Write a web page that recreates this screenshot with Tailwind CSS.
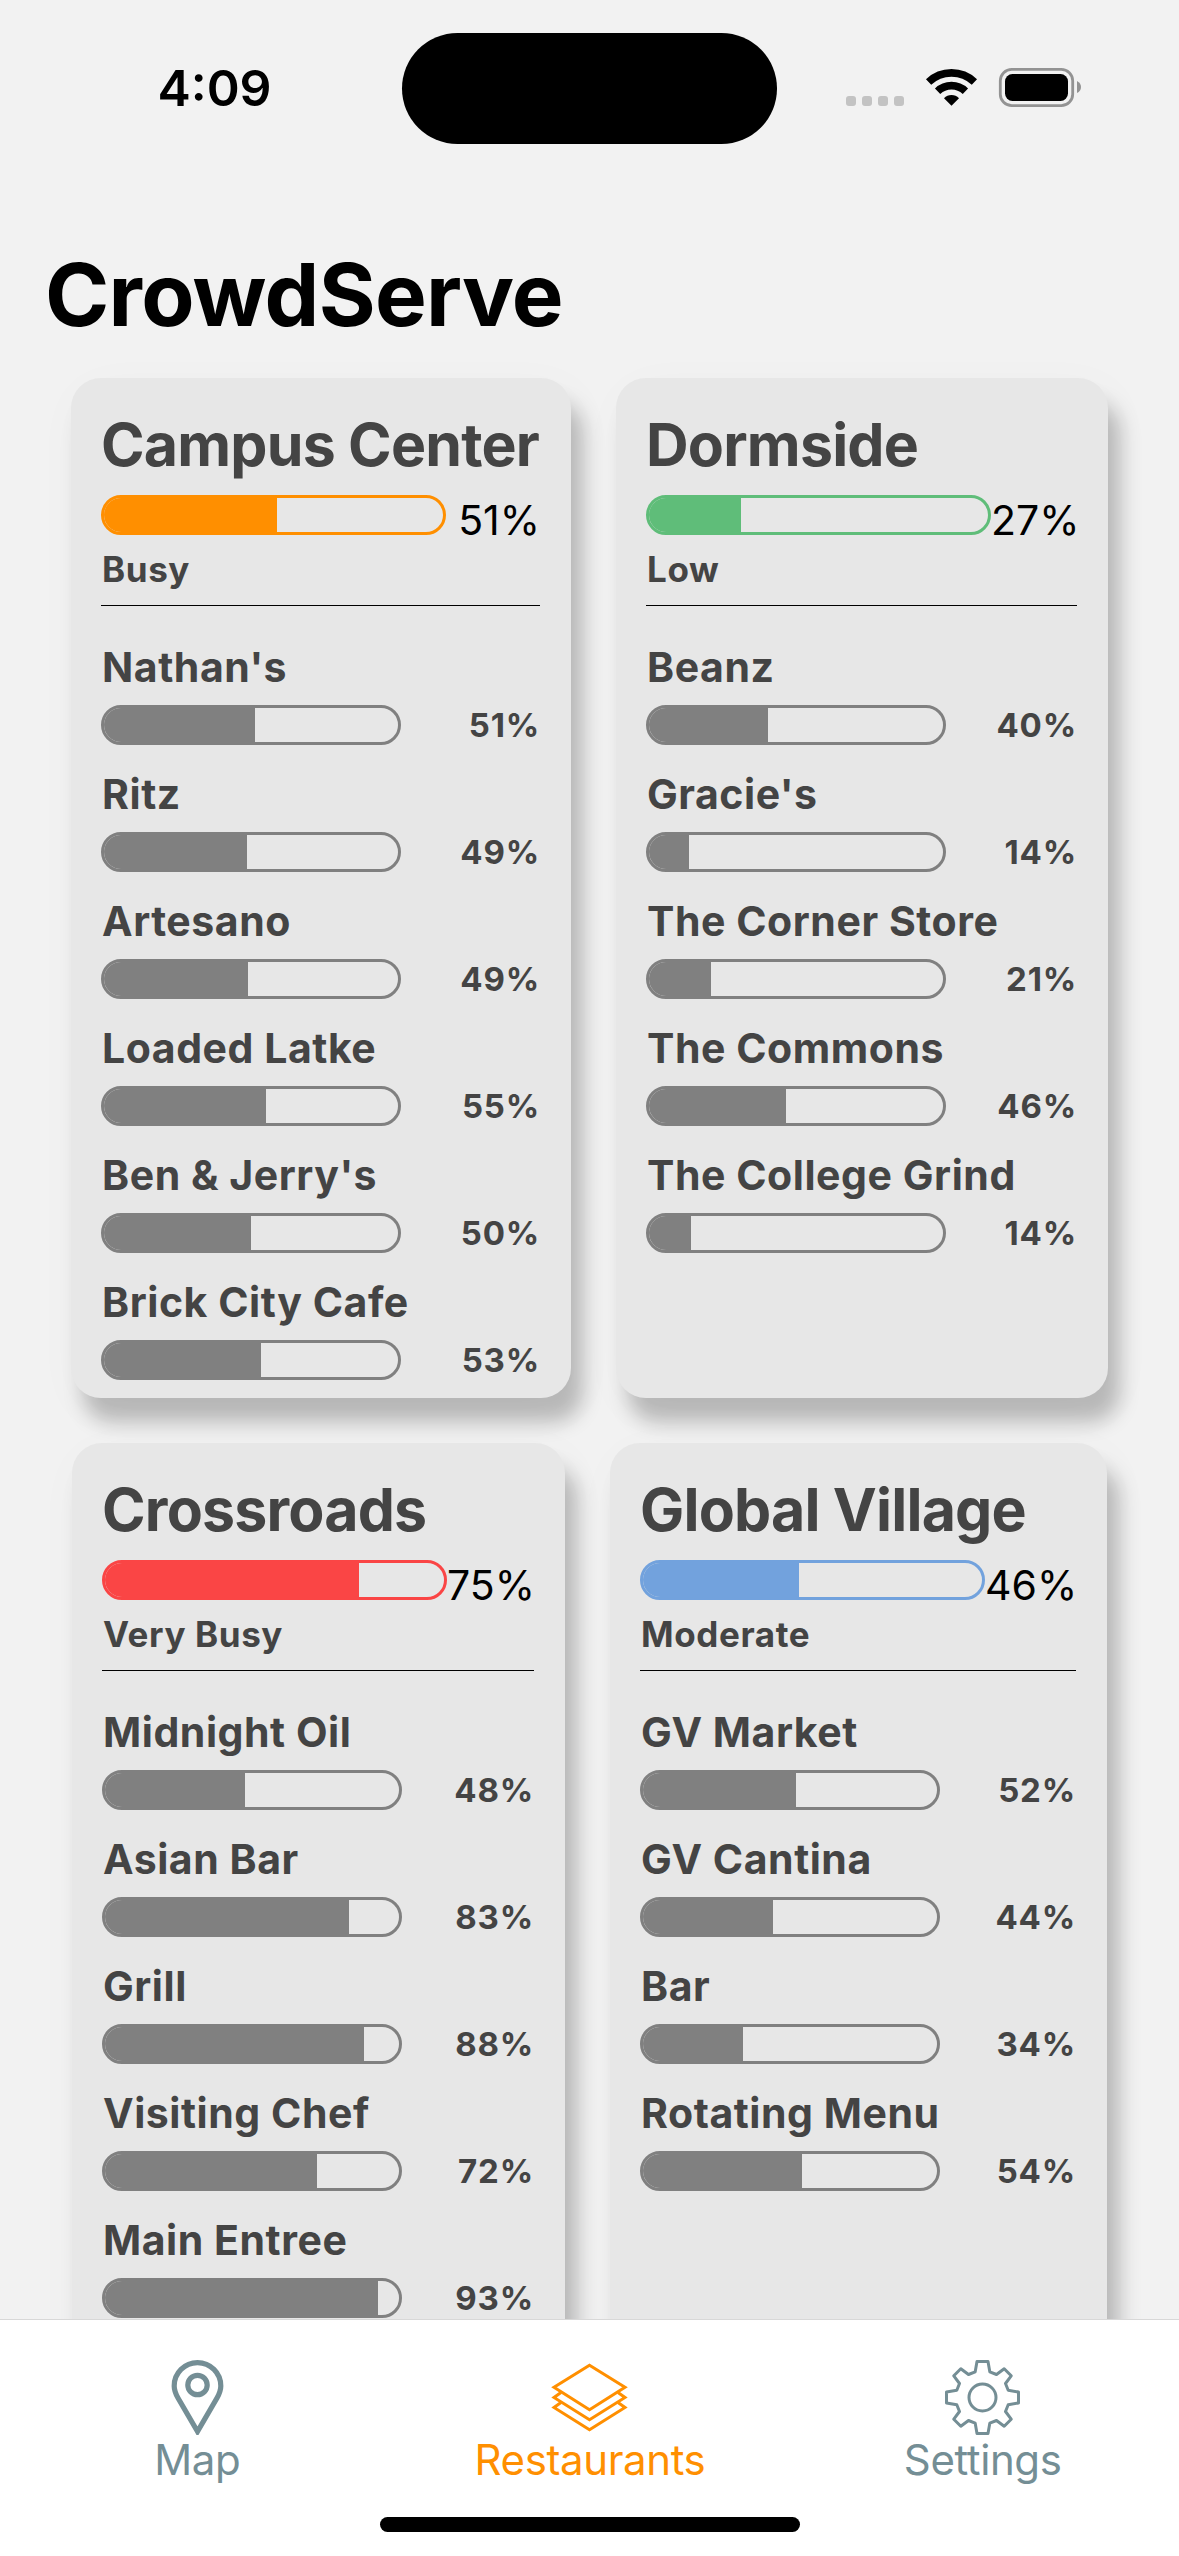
<!DOCTYPE html>
<html lang="en">
<head>
<meta charset="utf-8">
<title>CrowdServe</title>
<script src="https://cdn.jsdelivr.net/npm/@tailwindcss/browser@4"></script>
</head>
<body class="bg-[#f2f2f2] font-['Inter',sans-serif] text-black">
<div class="flex h-[2556px] w-[1179px] flex-col overflow-hidden">
  <header class="flex h-[245px] shrink-0 items-start">
    <div class="flex w-[402px] justify-center pt-[57px] pl-[27px] text-[50px] leading-[62px] font-semibold">4:09</div>
    <div class="mt-[33px] h-[111px] w-[375px] rounded-full bg-black"></div>
    <svg class="mt-[60px] ml-[63px] h-[56px] w-[250px]" viewBox="840 60 250 56">
      <g fill="#c3c3c3"><rect x="846" y="96" width="10" height="10" rx="3"/><rect x="862" y="96" width="10" height="10" rx="3"/><rect x="878" y="96" width="10" height="10" rx="3"/><rect x="894" y="96" width="10" height="10" rx="3"/></g>
      <g fill="none" stroke="#000" stroke-width="7.6"><path d="M928.6 82A33.3 33.3 0 0 1 974.4 82"/><path d="M937.6 91.2A20 20 0 0 1 965.4 91.2"/></g>
      <path d="M951.5 105.8L944 98.2A10.6 10.6 0 0 1 959 98.2Z"/>
      <rect x="1000.3" y="69.3" width="72.4" height="36.4" rx="11.5" fill="none" stroke="#939393" stroke-width="2.8"/>
      <rect x="1005" y="74" width="63" height="27" rx="7.5"/>
      <path d="M1077 81Q1081 83 1081 87T1077 93Z" fill="#939393"/>
    </svg>
  </header>
  <h1 class="h-[133px] shrink-0 pl-[45px] text-[87px] leading-[100px] font-bold tracking-[-0.75px]">CrowdServe</h1>
  <main class="flex min-h-0 flex-1 flex-col gap-[45px]">
    <div class="flex shrink-0 gap-[45px] pl-[71px]" id="row1"></div>
    <div class="flex shrink-0 gap-[45px] pl-[72px]" id="row2"></div>
  </main>
  <nav class="relative z-10 flex h-[237px] shrink-0 flex-col items-center border-t border-[#d8d8d8] bg-white text-[42px] leading-[50px] tracking-[-0.4px] text-[#748e95]">
    <div class="grid w-full grid-cols-3 pt-[40px] pl-px">
      <a class="flex flex-col items-center">
        <svg class="h-[75px] w-[75px]" viewBox="-37.5 0 75 75" fill="none" stroke="currentColor" stroke-width="5.2"><path d="M0 71.5L-19.5 38C-22 33.5-23.3 30-23.3 25.9A23.3 23.3 0 0 1 23.3 25.9C23.3 30 22 33.5 19.5 38Z"/><circle cy="25" r="9.7"/></svg>
        <span>Map</span>
      </a>
      <a class="flex flex-col items-center text-[#ff8f00]">
        <svg class="h-[75px] w-[77px]" viewBox="-38.5 0 77 75" fill="none" stroke="currentColor" stroke-width="3"><path d="M0 5.3L35.5 27.3L0 49.7L-35.5 27.3Z"/><path d="M-28.5 32.5L-35.5 37.5L0 59.7L35.5 37.5L28.5 32.5"/><path d="M-28.5 42.5L-35.5 47.5L0 69.7L35.5 47.5L28.5 42.5"/></svg>
        <span>Restaurants</span>
      </a>
      <a class="flex flex-col items-center">
        <svg class="h-[75px] w-[75px]" viewBox="-37.5 -37.5 75 75" fill="none" stroke="currentColor" stroke-width="3" stroke-linejoin="round"><path d="M-5.5-36L5.5-36L7.3-25.7L14-23L21.7-28.7L28.7-21.7L23-14L25.7-7.3L36-5.5L36 5.5L25.7 7.3L23 14L28.7 21.7L21.7 28.7L14 23L7.3 25.7L5.5 36L-5.5 36L-7.3 25.7L-14 23L-21.7 28.7L-28.7 21.7L-23 14L-25.7 7.3L-36 5.5L-36-5.5L-25.7-7.3L-23-14L-28.7-21.7L-21.7-28.7L-14-23L-7.3-25.7Z"/><circle r="13.5"/></svg>
        <span>Settings</span>
      </a>
    </div>
    <div class="mt-[32px] h-[15px] w-[420px] rounded-full bg-black"></div>
  </nav>
</div>
<script>
const halls = [
  { row: 'row1', width: 500, name: 'Campus Center', pct: 51, fill: 173, status: 'Busy', color: '#ff8f00',
    items: [["Nathan's", 51, 151], ['Ritz', 49, 143], ['Artesano', 49, 144], ['Loaded Latke', 55, 162], ["Ben & Jerry's", 50, 147], ['Brick City Cafe', 53, 157]] },
  { row: 'row1', width: 492, name: 'Dormside', pct: 27, fill: 92, status: 'Low', color: '#5fbd79',
    items: [['Beanz', 40, 119], ["Gracie's", 14, 40], ['The Corner Store', 21, 62], ['The Commons', 46, 137], ['The College Grind', 14, 42]] },
  { row: 'row2', width: 493, name: 'Crossroads', pct: 75, fill: 254, status: 'Very Busy', color: '#fa4545',
    items: [['Midnight Oil', 48, 140], ['Asian Bar', 83, 244], ['Grill', 88, 259], ['Visiting Chef', 72, 212], ['Main Entree', 93, 273]] },
  { row: 'row2', width: 497, name: 'Global Village', pct: 46, fill: 156, status: 'Moderate', color: '#72a2dd',
    items: [['GV Market', 52, 153], ['GV Cantina', 44, 130], ['Bar', 34, 100], ['Rotating Menu', 54, 159]] },
];
const bar = (size, color, fill) => `<div class="${size} h-[40px] shrink-0 overflow-hidden rounded-full border-3" style="border-color:${color}"><div class="h-full" style="width:${fill}px;background:${color}"></div></div>`;
for (const h of halls) {
  document.getElementById(h.row).insertAdjacentHTML('beforeend', `
  <section class="min-h-[1020px] shrink-0 rounded-[30px] bg-[#e7e7e7] pr-[31px] pl-[30px] pt-[30px] text-[#444] shadow-[12px_24px_20px_rgb(0_0_0/0.23),6px_12px_50px_rgb(0_0_0/0.03)]" style="width:${h.width}px">
    <h2 class="text-[59px] leading-[74px] font-bold tracking-[-0.8px] whitespace-nowrap">${h.name}</h2>
    <div class="mt-[13px] flex h-[50px] items-start justify-between">${bar('w-[345px]', h.color, h.fill)}<span class="text-[41px] leading-[50px] text-black">${h.pct}%</span></div>
    <p class="mt-[2px] pl-px text-[35px] leading-[44px] font-bold tracking-[0.6px]">${h.status}</p>
    <hr class="mt-[14px] border-t border-black">
    <ul class="mt-[36px] flex flex-col gap-[24px]">${h.items.map(([n, p, f]) => `
      <li>
        <p class="h-[50px] pl-px text-[41px] leading-[50px] font-bold tracking-[0.55px] whitespace-nowrap">${n}</p>
        <div class="mt-[13px] flex justify-between">${bar('w-[300px]', '#808080', f)}<span class="text-[33px] leading-[40px] font-bold tracking-[0.8px]">${p}%</span></div>
      </li>`).join('')}
    </ul>
  </section>`);
}
</script>
</body>
</html>
